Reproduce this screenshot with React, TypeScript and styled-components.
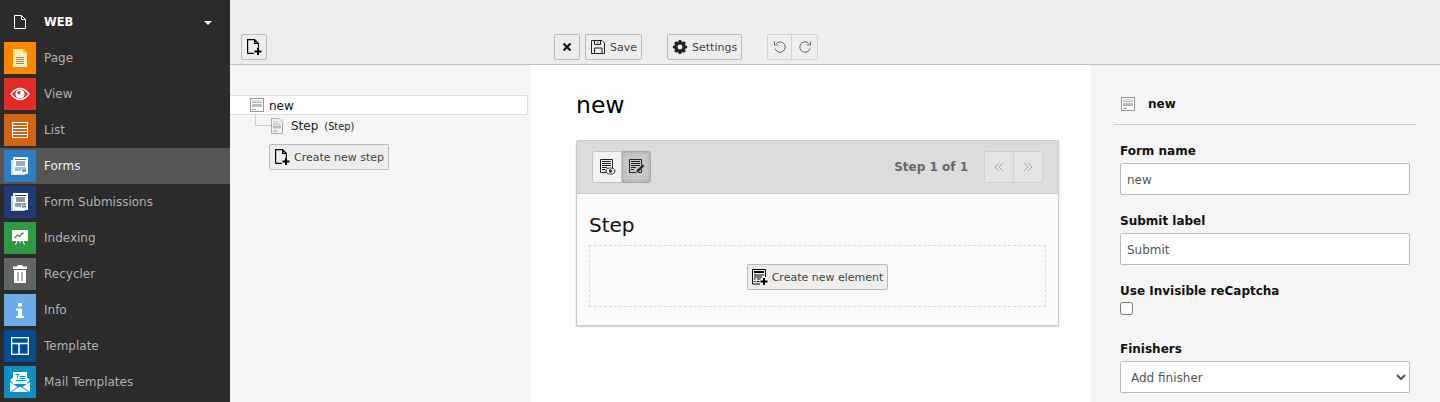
import React from 'react';
import styled, { createGlobalStyle } from 'styled-components';

const GlobalStyle = createGlobalStyle`
    html, body {
        margin: 0;
        padding: 0;
        background: #f5f5f5;
        overflow: hidden;
    }
    * {
        box-sizing: border-box;
    }
`;

const FONT = '"DejaVu Sans", Verdana, sans-serif';

const Page = styled.div`
    display: flex;
    width: 1440px;
    height: 402px;
    overflow: hidden;
    font-family: ${FONT};
    font-size: 11px;
    color: #333;
`;

// Module menu
const Sidebar = styled.nav`
    flex: 0 0 230px;
    background: #2b2b2b;
`;

const GroupHead = styled.div`
    display: flex;
    align-items: center;
    height: 40px;
    padding: 4px 0 0 13px;
    color: #fff;
    font-size: 11.5px;
    font-weight: bold;
`;

const GroupLabel = styled.span`
    flex: 1;
    margin-left: 17px;
`;

const Caret = styled.span`
    width: 0;
    height: 0;
    margin: 2px 18px 0 0;
    border-left: 4px solid transparent;
    border-right: 4px solid transparent;
    border-top: 4px solid #fff;
`;

const MenuRow = styled.div<{ $active?: boolean }>`
    display: flex;
    align-items: center;
    gap: 8px;
    height: 36px;
    padding-left: 4px;
    color: ${({ $active }) => ($active ? '#f0f0f0' : '#b0b0b0')};
    background: ${({ $active }) => ($active ? '#555' : 'transparent')};
    font-size: 12px;
`;

const Tile = styled.span<{ $bg: string }>`
    display: flex;
    align-items: center;
    justify-content: center;
    width: 32px;
    height: 32px;
    background: ${({ $bg }) => $bg};
`;

// Right of the menu
const Main = styled.div`
    flex: 1;
    display: flex;
    flex-direction: column;
    min-width: 0;
`;

const DocHeader = styled.header`
    display: flex;
    align-items: flex-end;
    height: 65px;
    padding-bottom: 4px;
    background: #eeeeee;
    border-bottom: 1px solid #c3c3c3;
`;

const HeaderLeft = styled.div`
    flex: 0 0 324px;
    padding-left: 11px;
`;

const HeaderButtons = styled.div`
    display: flex;
`;

const Btn = styled.button<{ $gap?: number }>`
    display: inline-flex;
    align-items: center;
    gap: 4px;
    height: 26px;
    min-width: 26px;
    margin: 0 ${({ $gap }) => $gap ?? 0}px 0 0;
    padding: 0 4px;
    border: 1px solid #bbbbbb;
    border-radius: 2px;
    background: #eeeeee;
    color: #444;
    font-family: ${FONT};
    font-size: 11px;
    white-space: nowrap;
    justify-content: center;
`;

const FadedBtn = styled(Btn)<{ $side: 'left' | 'right' }>`
    width: ${({ $side }) => ($side === 'left' ? 25 : 26)}px;
    min-width: 0;
    padding: 0;
    border-color: #d2d2d2;
    border-radius: ${({ $side }) => ($side === 'left' ? '2px 0 0 2px' : '0 2px 2px 0')};
    ${({ $side }) => ($side === 'right' ? 'border-left: 0;' : '')}
`;

const Columns = styled.div`
    flex: 1;
    display: flex;
    min-height: 0;
`;

// Tree column
const TreePane = styled.section`
    flex: 0 0 300px;
    padding-top: 30px;
    background: #f5f5f5;
`;

const TreeRoot = styled.div`
    display: flex;
    align-items: center;
    gap: 5px;
    width: 298px;
    height: 20px;
    padding-left: 20px;
    background: #fff;
    border: 1px solid #dddddd;
    border-left: 0;
    border-radius: 0 2px 2px 0;
    color: #111;
    font-size: 12px;
`;

const TreeRootName = styled.span`
    padding-top: 2px;
`;

const TreeChild = styled.div`
    position: relative;
    display: flex;
    align-items: center;
    height: 22px;
    margin-left: 41px;
    color: #222;
    font-size: 12px;
    &::before {
        content: '';
        position: absolute;
        left: -16px;
        top: -1px;
        width: 15px;
        height: 11px;
        border-left: 1px solid #cfcfcf;
        border-bottom: 1px solid #cfcfcf;
    }
`;

const TreeChildName = styled.span`
    margin-left: 8px;
`;

const TreeHint = styled.small`
    margin-left: 6px;
    font-size: 9.8px;
`;

const TreeAction = styled.div`
    margin: 7px 0 0 39px;
`;

// Stage column
const Stage = styled.main`
    flex: 0 0 560px;
    padding: 26px 31px 0 46px;
    background: #fff;
`;

const Title = styled.h1`
    margin: 0 0 20px;
    height: 29px;
    color: #000;
    font-size: 23.5px;
    font-weight: normal;
    line-height: 29px;
`;

const Card = styled.div`
    border: 1px solid #cccccc;
    border-radius: 2px 2px 0 0;
    box-shadow: 0 1px 2px rgba(0, 0, 0, 0.2);
    background: #fafafa;
`;

const CardHead = styled.div`
    display: flex;
    align-items: center;
    height: 53px;
    padding: 0 15px;
    background: #dcdcdc;
    border-bottom: 1px solid #cccccc;
`;

const ViewToggle = styled.button<{ $on?: boolean; $side: 'left' | 'right' }>`
    display: flex;
    align-items: center;
    justify-content: center;
    width: ${({ $side }) => ($side === 'left' ? 30 : 29)}px;
    height: 32px;
    padding: 0;
    border: 1px solid ${({ $on }) => ($on ? '#a9a9a9' : '#c4c4c4')};
    border-radius: ${({ $side }) => ($side === 'left' ? '3px 0 0 3px' : '0 3px 3px 0')};
    background: ${({ $on }) => ($on ? '#c8c8c8' : '#f2f2f2')};
    box-shadow: ${({ $on }) => ($on ? 'inset 0 0 4px rgba(0, 0, 0, 0.2)' : 'none')};
    ${({ $side }) => ($side === 'right' ? 'border-left: 0;' : '')}
`;

const StepCount = styled.span`
    margin-left: auto;
    margin-right: 16px;
    color: #666;
    font-size: 12px;
    font-weight: bold;
`;

const PagerBtn = styled.button<{ $side: 'left' | 'right' }>`
    display: flex;
    align-items: center;
    justify-content: center;
    width: ${({ $side }) => ($side === 'left' ? 30 : 29)}px;
    height: 32px;
    padding: 0;
    border: 1px solid #d0d0d0;
    border-radius: ${({ $side }) => ($side === 'left' ? '2px 0 0 2px' : '0 2px 2px 0')};
    background: #e4e4e4;
    ${({ $side }) => ($side === 'right' ? 'border-left: 0;' : '')}
`;

const CardBody = styled.div`
    padding: 18px 12px 18px;
`;

const StepTitle = styled.h2`
    margin: 0 0 7px;
    height: 26px;
    color: #111;
    font-size: 20px;
    font-weight: normal;
    line-height: 26px;
`;

const DropZone = styled.div`
    display: flex;
    align-items: center;
    justify-content: center;
    height: 62px;
    padding-top: 2px;
    border: 1px dashed #d9d9d9;
`;

// Inspector column
const Inspector = styled.aside`
    flex: 1;
    padding: 0 24px;
    background: #f5f5f5;
`;

const InspectorHead = styled.div`
    display: flex;
    align-items: center;
    gap: 13px;
    height: 60px;
    padding: 18px 0 0 7px;
    border-bottom: 1px solid #c8c8c8;
    color: #111;
    font-size: 12px;
    font-weight: bold;
`;

const Fields = styled.div`
    padding-left: 6px;
`;

const Label = styled.label<{ $top: number }>`
    display: block;
    margin: ${({ $top }) => $top}px 0 5px;
    height: 14px;
    color: #111;
    font-size: 12px;
    font-weight: bold;
    line-height: 14px;
`;

const TextInput = styled.input`
    display: block;
    width: 290px;
    height: 32px;
    padding: 2px 6px 0;
    border: 1px solid #bbbbbb;
    border-radius: 2px;
    background: #fff;
    color: #555;
    font-family: ${FONT};
    font-size: 12px;
    outline: none;
`;

const Check = styled.span`
    display: block;
    width: 13px;
    height: 13px;
    margin-top: -1px;
    background: #fff;
    border: 1px solid #767676;
    border-radius: 2.5px;
`;

const Select = styled.select`
    display: block;
    width: 290px;
    height: 32px;
    padding: 2px 6px 0;
    border: 1px solid #bbbbbb;
    border-radius: 2px;
    background: #fff;
    color: #555;
    font-family: ${FONT};
    font-size: 12px;
`;

const NewDocIcon = () => (
    <svg width="16" height="16" viewBox="0 0 16 16" fill="none" stroke="#000" strokeWidth="1.2">
        <path d="M1.6 14.4V.6h7l3.8 3.8v4.4M8.6.6v3.8h3.8M1.6 14.4h6.2" />
        <path d="M12 9v7M8.5 12.5h7" strokeWidth="2" />
    </svg>
);

const FormPlusIcon = () => (
    <svg width="16" height="16" viewBox="0 0 16 16" fill="none" stroke="#000">
        <path d="M.5 15V.5h13v7.5M.5 15h7.5" />
        <path d="M2 3h10" strokeWidth="2" />
        <path d="M2 6h10M2 8h8M2 10h1.5M5 10h3.5M2 12.5h1.5M5 12.5h2.5" strokeWidth="1.2" />
        <path d="M12 9v7M8.5 12.5h7" strokeWidth="2" />
    </svg>
);

const FormGlyph = () => (
    <path d="M2.5 1.5h12v13h-12zM4 3.5h9M4 5.5h9M4 7.5h9M4 9.5h5M4 11.5h3" fill="none" stroke="#222" />
);

const PreviewIcon = () => (
    <svg width="18" height="18" viewBox="0 0 18 18">
        <FormGlyph />
        <ellipse cx="12.5" cy="13" rx="4.5" ry="3" fill="#f2f2f2" stroke="#333" />
        <circle cx="12.5" cy="13" r="1.7" fill="#333" />
    </svg>
);

const EditIcon = () => (
    <svg width="18" height="18" viewBox="0 0 18 18">
        <FormGlyph />
        <path d="M9 15l.7-3 6-6 2 2-6 6z" fill="#222" stroke="#c8c8c8" strokeWidth=".6" />
    </svg>
);

const CloseIcon = () => (
    <svg width="10" height="10" viewBox="0 0 10 10" stroke="#111" strokeWidth="2.2">
        <path d="M1.5 1.5l7 7M8.5 1.5l-7 7" />
    </svg>
);

const SaveIcon = () => (
    <svg width="16" height="16" viewBox="0 0 16 16" fill="none" stroke="#222">
        <path d="M1.5 1.5h10.5l2.5 2.5v10.5h-13z" />
        <path d="M4.5 1.5v4h6v-4M8 2.5v2M4.5 14.5v-5.5h7.5v5.5" />
    </svg>
);

const GearIcon = () => (
    <svg width="16" height="16" viewBox="-1 -1 18 18">
        <path
            fill="#222"
            fillRule="evenodd"
            d="M6.6 0h2.8l.4 1.9 1.2.5 1.6-1 2 2-1 1.6.5 1.2 1.9.4v2.8l-1.9.4-.5 1.2 1 1.6-2 2-1.6-1-1.2.5-.4 1.9H6.6l-.4-1.9-1.2-.5-1.6 1-2-2 1-1.6-.5-1.2L0 9.4V6.6l1.9-.4.5-1.2-1-1.6 2-2 1.6 1 1.2-.5zM8 5.2a2.8 2.8 0 1 0 0 5.6 2.8 2.8 0 0 0 0-5.6z"
        />
    </svg>
);

const Flipped = styled.svg<{ $flip?: boolean }>`
    transform: ${({ $flip }) => ($flip ? 'scaleX(-1)' : 'none')};
`;

const UndoIcon = ({ flip }: { flip?: boolean }) => (
    <Flipped $flip={flip} width="14" height="14" viewBox="0 0 14 14" fill="none" stroke="#666">
        <path d="M3.2 3.5A5.2 5.2 0 1 1 2 8.5" />
        <path d="M1.5 1.5v3.5H5" />
    </Flipped>
);

const ChevronsIcon = ({ flip }: { flip?: boolean }) => (
    <Flipped $flip={flip} width="10" height="10" viewBox="0 0 10 10" fill="none" stroke="#aaa">
        <path d="M5 1L1 5l4 4M9 1L5 5l4 4" />
    </Flipped>
);

const FormRecordIcon = () => (
    <svg width="14" height="14" viewBox="0 0 14 14">
        <rect x=".5" y=".5" width="13" height="13" fill="#fff" stroke="#999" />
        <path d="M2 3h10M2 4.5h10" stroke="#bbb" />
        <rect x="2" y="6" width="10" height="3" fill="#bbb" />
        <path d="M2 11.5h4" stroke="#7a9ccf" />
    </svg>
);

const StepRecordIcon = () => (
    <svg width="12" height="16" viewBox="0 0 12 16">
        <path d="M.5.5H8L11.5 4v11.5H.5z" fill="#f4f4f4" stroke="#aaa" />
        <path d="M2 4h5M2 6h8" stroke="#bbb" />
        <rect x="2" y="7.5" width="8" height="3" fill="#bbb" />
        <path d="M2 13h4" stroke="#6f9bd0" />
    </svg>
);

const menuIcons: Record<string, React.ReactNode> = {
    blankdoc: (
        <svg width="14" height="16" viewBox="0 0 14 16" fill="none" stroke="#fff">
            <path d="M1.5 14.5v-13h7l4 4v9zM8.5 1.5v4h4" />
        </svg>
    ),
    page: (
        <svg width="16" height="20" viewBox="0 0 16 20">
            <path d="M1 1h10l4 4v14H1z" fill="#ffedb8" />
            <path d="M11 1v4h4z" fill="#ffc24d" />
            <path d="M4 9.5h8M4 11.5h8M4 13.5h8M4 15.5h8" stroke="#c98200" />
        </svg>
    ),
    view: (
        <svg width="20" height="14" viewBox="0 0 20 14">
            <path d="M1 7c3-4 6-5.5 9-5.5S16 3 19 7c-3 4-6 5.5-9 5.5S4 11 1 7z" fill="none" stroke="#fff" strokeWidth="1.4" />
            <circle cx="10" cy="7" r="4.6" fill="#fff" />
            <circle cx="9" cy="5.6" r="1.6" fill="#e02b27" />
        </svg>
    ),
    list: (
        <svg width="16" height="16" viewBox="0 0 16 16" fill="none" stroke="#fff">
            <path d="M.5.5h15v15H.5z" />
            <path d="M.5 3.5h15M.5 6.5h15M.5 9.5h15M.5 12.5h15" />
        </svg>
    ),
    forms: (
        <svg width="18" height="18" viewBox="0 0 18 18">
            <path d="M0 3h2v14h12v1H0z" fill="#fff" opacity=".75" />
            <rect x="2" y="0" width="15" height="17" fill="#fff" />
            <rect x="4" y="2" width="11" height="1" fill="#2d7fc1" />
            <rect x="5" y="4" width="9" height="5" fill="#8cb0d2" />
            <path d="M4 11h11M4 13h6" stroke="#2d7fc1" />
            <rect x="11" y="12.5" width="4" height="2" fill="#2d7fc1" />
        </svg>
    ),
    submissions: (
        <svg width="18" height="18" viewBox="0 0 18 18">
            <path d="M0 3h2v14h12v1H0z" fill="#fff" opacity=".75" />
            <rect x="2" y="0" width="15" height="17" fill="#fff" />
            <rect x="4" y="2" width="11" height="1" fill="#1f3a75" />
            <rect x="5" y="4" width="9" height="5" fill="#8d94b0" />
            <path d="M4 11h11M4 13h6" stroke="#1f3a75" />
            <rect x="11" y="12.5" width="4" height="2" fill="#777" />
        </svg>
    ),
    indexing: (
        <svg width="16" height="16" viewBox="0 0 16 16">
            <rect x="0" y="0" width="16" height="11" fill="#fff" />
            <path d="M2.5 8l3-3 2 1.5 3-3.5 1 1" fill="none" stroke="#2f9a44" strokeWidth="1.2" />
            <path d="M3.5 15l1.5-4M12.5 15L11 11M8 11v2" stroke="#fff" />
        </svg>
    ),
    recycler: (
        <svg width="14" height="18" viewBox="0 0 14 18">
            <path d="M5 0h4l1 1.5h4V4H0V1.5h4z" fill="#fff" />
            <path d="M1 5h12v13H1z" fill="#fff" />
            <path d="M5 7v9M9 7v9" stroke="#616566" />
        </svg>
    ),
    info: (
        <svg width="8" height="15" viewBox="0 0 8 15">
            <rect x="2" y="0" width="4" height="3.5" fill="#fff" />
            <path d="M0 5.5h6V13h2v2H0v-2h2V7.5H0z" fill="#fff" />
        </svg>
    ),
    template: (
        <svg width="18" height="18" viewBox="0 0 18 18" fill="none" stroke="#fff" strokeWidth="1.3">
            <rect x=".7" y=".7" width="16.6" height="16.6" />
            <path d="M1 6.5h16M8 6.5V17" strokeWidth="1.5" />
        </svg>
    ),
    mail: (
        <svg width="20" height="20" viewBox="0 0 20 20">
            <path d="M3 0h14v12H3z" fill="#fff" />
            <path d="M5.5 2.5h4M7.5 2.5v4M9.5 4.5h6M9.5 6.5h6M5.5 8.5h10" stroke="#0c8fc2" />
            <path d="M0 8l3-2.5V11zM20 8l-3-2.5V11z" fill="#fff" />
            <path d="M0 10l7.5 5L0 20zM20 10l-7.5 5 7.5 5zM1.5 20L10 14.5l8.5 5.5z" fill="#fff" />
        </svg>
    )
};

const menu = [
    { key: 'page', label: 'Page', bg: '#ff8700' },
    { key: 'view', label: 'View', bg: '#e02b27' },
    { key: 'list', label: 'List', bg: '#d26313' },
    { key: 'forms', label: 'Forms', bg: '#2d7fc1', active: true },
    { key: 'submissions', label: 'Form Submissions', bg: '#1f3a75' },
    { key: 'indexing', label: 'Indexing', bg: '#2f9a44' },
    { key: 'recycler', label: 'Recycler', bg: '#616566' },
    { key: 'info', label: 'Info', bg: '#6daae8' },
    { key: 'template', label: 'Template', bg: '#004d95' },
    { key: 'mail', label: 'Mail Templates', bg: '#0c8fc2' }
];

const App = () => (
    <>
        <GlobalStyle />
        <Page>
            <Sidebar>
                <GroupHead>
                    {menuIcons.blankdoc}
                    <GroupLabel>WEB</GroupLabel>
                    <Caret />
                </GroupHead>
                {menu.map((item) => (
                    <MenuRow key={item.key} $active={item.active}>
                        <Tile $bg={item.bg}>{menuIcons[item.key]}</Tile>
                        {item.label}
                    </MenuRow>
                ))}
            </Sidebar>
            <Main>
                <DocHeader>
                    <HeaderLeft>
                        <Btn>
                            <NewDocIcon />
                        </Btn>
                    </HeaderLeft>
                    <HeaderButtons>
                        <Btn $gap={5}>
                            <CloseIcon />
                        </Btn>
                        <Btn $gap={25}>
                            <SaveIcon />
                            Save
                        </Btn>
                        <Btn $gap={25}>
                            <GearIcon />
                            Settings
                        </Btn>
                        <FadedBtn $side="left">
                            <UndoIcon />
                        </FadedBtn>
                        <FadedBtn $side="right">
                            <UndoIcon flip />
                        </FadedBtn>
                    </HeaderButtons>
                </DocHeader>
                <Columns>
                    <TreePane>
                        <TreeRoot>
                            <FormRecordIcon />
                            <TreeRootName>new</TreeRootName>
                        </TreeRoot>
                        <TreeChild>
                            <StepRecordIcon />
                            <TreeChildName>Step</TreeChildName>
                            <TreeHint>(Step)</TreeHint>
                        </TreeChild>
                        <TreeAction>
                            <Btn>
                                <NewDocIcon />
                                Create new step
                            </Btn>
                        </TreeAction>
                    </TreePane>
                    <Stage>
                        <Title>new</Title>
                        <Card>
                            <CardHead>
                                <ViewToggle $side="left">
                                    <PreviewIcon />
                                </ViewToggle>
                                <ViewToggle $side="right" $on>
                                    <EditIcon />
                                </ViewToggle>
                                <StepCount>Step 1 of 1</StepCount>
                                <PagerBtn $side="left">
                                    <ChevronsIcon />
                                </PagerBtn>
                                <PagerBtn $side="right">
                                    <ChevronsIcon flip />
                                </PagerBtn>
                            </CardHead>
                            <CardBody>
                                <StepTitle>Step</StepTitle>
                                <DropZone>
                                    <Btn>
                                        <FormPlusIcon />
                                        Create new element
                                    </Btn>
                                </DropZone>
                            </CardBody>
                        </Card>
                    </Stage>
                    <Inspector>
                        <InspectorHead>
                            <FormRecordIcon />
                            new
                        </InspectorHead>
                        <Fields>
                            <Label $top={19}>Form name</Label>
                            <TextInput defaultValue="new" />
                            <Label $top={19}>Submit label</Label>
                            <TextInput defaultValue="Submit" />
                            <Label $top={19}>Use Invisible reCaptcha</Label>
                            <Check />
                            <Label $top={27}>Finishers</Label>
                            <Select defaultValue="add">
                                <option value="add">Add finisher</option>
                            </Select>
                        </Fields>
                    </Inspector>
                </Columns>
            </Main>
        </Page>
    </>
);

export default App;
